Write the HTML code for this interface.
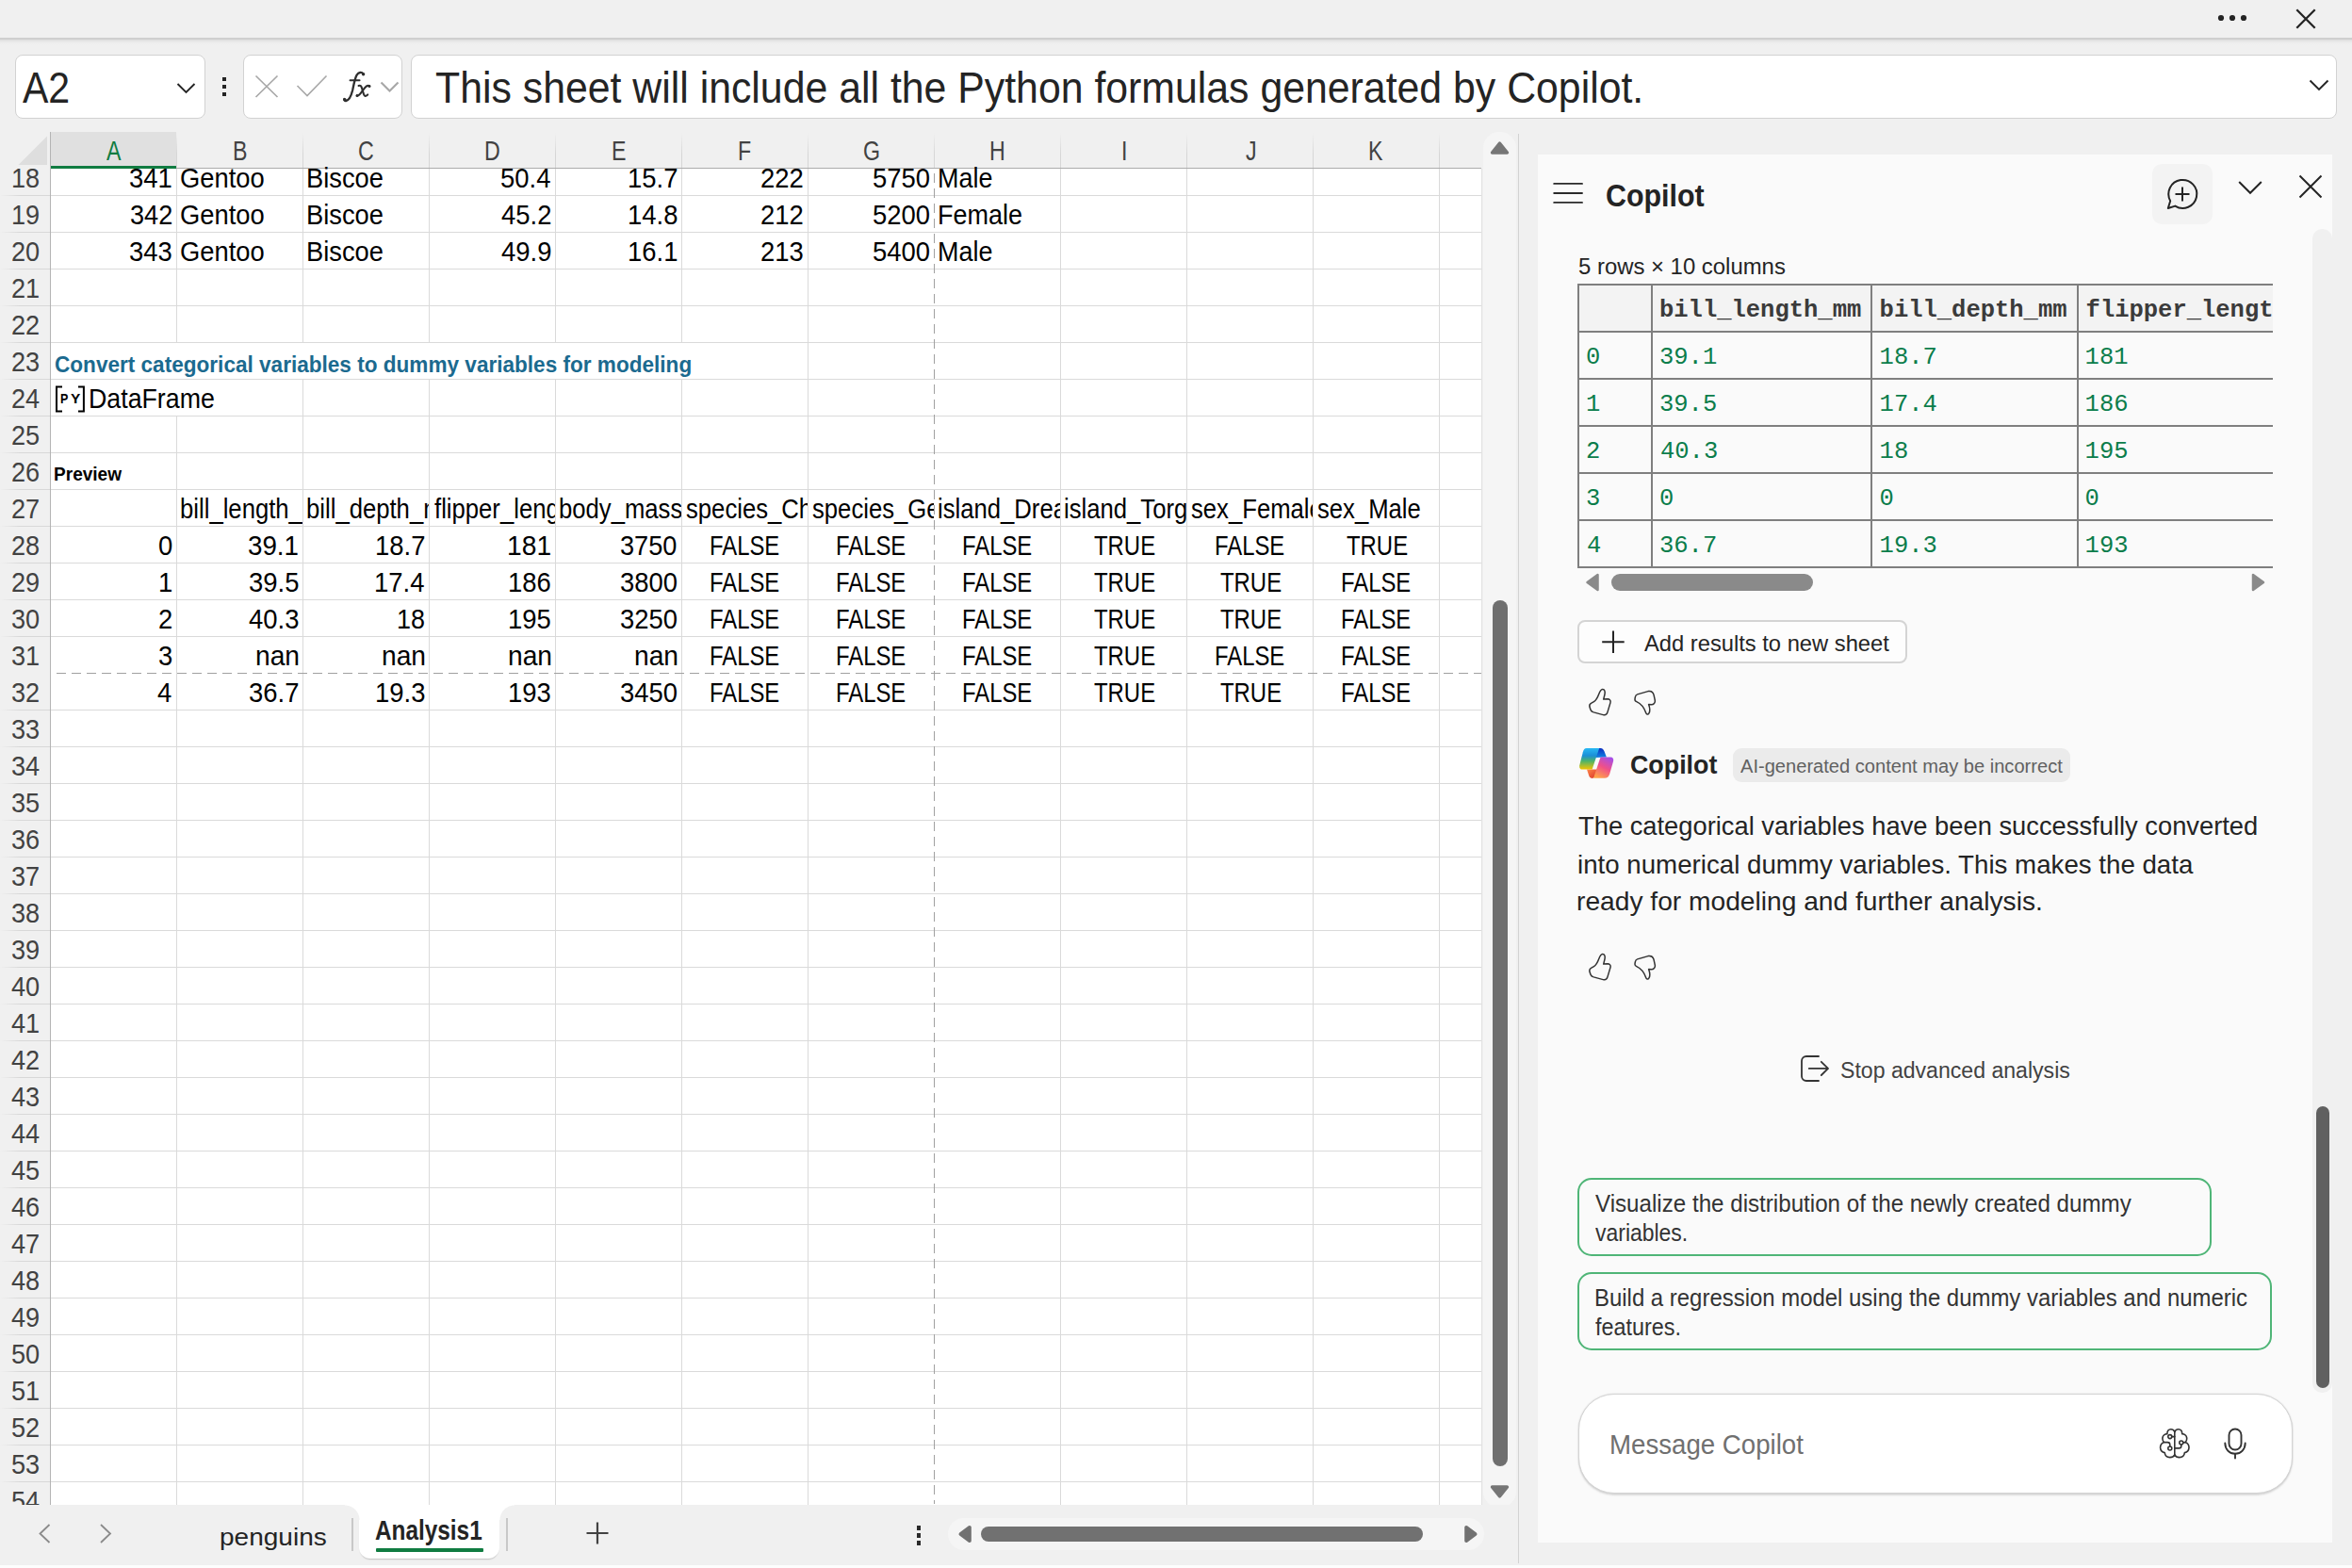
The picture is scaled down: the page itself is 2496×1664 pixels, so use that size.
<!DOCTYPE html>
<html><head><meta charset="utf-8"><style>
html,body{margin:0;padding:0}
body{width:2496px;height:1664px;overflow:hidden;background:#f0f0f0;position:relative;font-family:"Liberation Sans",sans-serif}
body div, body svg{position:absolute;box-sizing:content-box}
.t{white-space:pre;line-height:1}
svg{overflow:visible}
</style></head><body>
<div style="left:0;top:40px;width:2496px;height:8px;background:linear-gradient(#cfcfcf 0px,#cfcfcf 2px,#dadada 2px,#e3e3e3 3px,#e8e8e8 4px,#ececec 5px,#eeeeee 6px,#f0f0f0 8px)"></div>
<svg style="left:2340px;top:0;width:156px;height:40px" width="156" height="40"><circle cx="17" cy="19" r="3.1" fill="#242424"/><circle cx="29" cy="19" r="3.1" fill="#242424"/><circle cx="41" cy="19" r="3.1" fill="#242424"/><path d="M97.3 10.3 L116.7 29.7 M116.7 10.3 L97.3 29.7" stroke="#242424" stroke-width="2.3"/></svg>
<div style="left:16px;top:58px;width:200px;height:66px;background:#fff;border:1px solid #d2d2d2;border-radius:8px"></div>
<svg style="left:180px;top:80px;width:36px;height:30px" width="36" height="30"><path d="M8.5 9 L17.5 18 L26.5 9" fill="none" stroke="#242424" stroke-width="1.9"/></svg>
<div style="left:236px;top:82px;width:4px;height:4px;background:#242424"></div><div style="left:236px;top:90px;width:4px;height:4px;background:#242424"></div><div style="left:236px;top:98px;width:4px;height:4px;background:#242424"></div>
<div style="left:258px;top:58px;width:167px;height:66px;background:#fff;border:1px solid #d2d2d2;border-radius:8px"></div>
<svg style="left:258px;top:58px;width:170px;height:68px" width="170" height="68"><path d="M13.5 22.5 L36.5 45 M36.5 22.5 L13.5 45" stroke="#a8a8a8" stroke-width="1.7"/><path d="M57.5 33 L68 43.5 L88.5 22.5" fill="none" stroke="#a8a8a8" stroke-width="1.6"/><path d="M146.5 29.5 L155.5 38.5 L164.5 29.5" fill="none" stroke="#a8a8a8" stroke-width="2.2"/><g transform="translate(-8,-3)"><g fill="none" stroke="#2e2e2e" stroke-linecap="round"><path d="M135.6 23.6 C134 21.2 130.6 21.4 128.6 24.6 C126.6 28 125.6 34 124.1 41 C122.6 47 120.6 51.4 117.2 52 C115.8 52.2 114.9 51.2 115.4 50" stroke-width="2.3"/><path d="M121.5 30.3 L131.6 30.3" stroke-width="1.9"/><path d="M130.6 36 C132.4 35.2 133.4 36.2 134.1 38.6 L135.9 44.8 C136.7 47.4 138 47.6 140.2 45.4" stroke-width="2.1"/><path d="M142 36.2 C140.2 35.2 138.6 36.2 136.8 38.6 L132.6 44.2 C131.2 46 129.8 47 128.9 46.2" stroke-width="2.1"/></g><g fill="#2e2e2e"><circle cx="135.6" cy="23.8" r="1.7"/><circle cx="115.8" cy="50.6" r="1.7"/><circle cx="142" cy="36.4" r="1.5"/><circle cx="129" cy="46.4" r="1.5"/></g></g></svg>
<div style="left:436px;top:58px;width:2042px;height:66px;background:#fff;border:1px solid #d2d2d2;border-radius:8px"></div>
<svg style="left:2440px;top:76px;width:40px;height:30px" width="40" height="30"><path d="M11.5 9.5 L21 19 L30.5 9.5" fill="none" stroke="#242424" stroke-width="1.9"/></svg>
<div style="left:54px;top:179px;width:1518px;height:1418px;background:#fff"></div>
<div style="left:54px;top:140px;width:133px;height:36px;background:#e0e0e0"></div>
<div style="left:53px;top:176px;width:134px;height:3px;background:#107c41"></div>
<div style="left:187px;top:178px;width:1385px;height:1px;background:#acacac"></div>
<div style="left:53px;top:140px;width:1px;height:1457px;background:#b4b4b4"></div>
<svg style="left:19px;top:144px;width:32px;height:32px" width="32" height="32"><path d="M31 0.5 L31 31 L0.5 31 Z" fill="#dedede"/></svg>
<div style="left:187px;top:141px;width:1px;height:37px;background:linear-gradient(rgba(214,214,214,0),#d6d6d6 60%)"></div>
<div style="left:321px;top:141px;width:1px;height:37px;background:linear-gradient(rgba(214,214,214,0),#d6d6d6 60%)"></div>
<div style="left:455px;top:141px;width:1px;height:37px;background:linear-gradient(rgba(214,214,214,0),#d6d6d6 60%)"></div>
<div style="left:589px;top:141px;width:1px;height:37px;background:linear-gradient(rgba(214,214,214,0),#d6d6d6 60%)"></div>
<div style="left:723px;top:141px;width:1px;height:37px;background:linear-gradient(rgba(214,214,214,0),#d6d6d6 60%)"></div>
<div style="left:857px;top:141px;width:1px;height:37px;background:linear-gradient(rgba(214,214,214,0),#d6d6d6 60%)"></div>
<div style="left:991px;top:141px;width:1px;height:37px;background:linear-gradient(rgba(214,214,214,0),#d6d6d6 60%)"></div>
<div style="left:1125px;top:141px;width:1px;height:37px;background:linear-gradient(rgba(214,214,214,0),#d6d6d6 60%)"></div>
<div style="left:1259px;top:141px;width:1px;height:37px;background:linear-gradient(rgba(214,214,214,0),#d6d6d6 60%)"></div>
<div style="left:1393px;top:141px;width:1px;height:37px;background:linear-gradient(rgba(214,214,214,0),#d6d6d6 60%)"></div>
<div style="left:1527px;top:141px;width:1px;height:37px;background:linear-gradient(rgba(214,214,214,0),#d6d6d6 60%)"></div>
<div style="left:187px;top:179px;width:1px;height:1418px;background:#dadada"></div>
<div style="left:321px;top:179px;width:1px;height:1418px;background:#dadada"></div>
<div style="left:455px;top:179px;width:1px;height:1418px;background:#dadada"></div>
<div style="left:589px;top:179px;width:1px;height:1418px;background:#dadada"></div>
<div style="left:723px;top:179px;width:1px;height:1418px;background:#dadada"></div>
<div style="left:857px;top:179px;width:1px;height:1418px;background:#dadada"></div>
<div style="left:1125px;top:179px;width:1px;height:1418px;background:#dadada"></div>
<div style="left:1259px;top:179px;width:1px;height:1418px;background:#dadada"></div>
<div style="left:1393px;top:179px;width:1px;height:1418px;background:#dadada"></div>
<div style="left:1527px;top:179px;width:1px;height:1418px;background:#dadada"></div>
<div style="left:1572px;top:179px;width:1px;height:1418px;background:#e2e2e2"></div>
<div style="left:54px;top:207px;width:1518px;height:1px;background:#dadada"></div>
<div style="left:0px;top:207px;width:53px;height:1px;background:linear-gradient(90deg,rgba(216,216,216,0),#d8d8d8 40%)"></div>
<div style="left:54px;top:246px;width:1518px;height:1px;background:#dadada"></div>
<div style="left:0px;top:246px;width:53px;height:1px;background:linear-gradient(90deg,rgba(216,216,216,0),#d8d8d8 40%)"></div>
<div style="left:54px;top:285px;width:1518px;height:1px;background:#dadada"></div>
<div style="left:0px;top:285px;width:53px;height:1px;background:linear-gradient(90deg,rgba(216,216,216,0),#d8d8d8 40%)"></div>
<div style="left:54px;top:324px;width:1518px;height:1px;background:#dadada"></div>
<div style="left:0px;top:324px;width:53px;height:1px;background:linear-gradient(90deg,rgba(216,216,216,0),#d8d8d8 40%)"></div>
<div style="left:54px;top:363px;width:1518px;height:1px;background:#dadada"></div>
<div style="left:0px;top:363px;width:53px;height:1px;background:linear-gradient(90deg,rgba(216,216,216,0),#d8d8d8 40%)"></div>
<div style="left:54px;top:402px;width:1518px;height:1px;background:#dadada"></div>
<div style="left:0px;top:402px;width:53px;height:1px;background:linear-gradient(90deg,rgba(216,216,216,0),#d8d8d8 40%)"></div>
<div style="left:54px;top:441px;width:1518px;height:1px;background:#dadada"></div>
<div style="left:0px;top:441px;width:53px;height:1px;background:linear-gradient(90deg,rgba(216,216,216,0),#d8d8d8 40%)"></div>
<div style="left:54px;top:480px;width:1518px;height:1px;background:#dadada"></div>
<div style="left:0px;top:480px;width:53px;height:1px;background:linear-gradient(90deg,rgba(216,216,216,0),#d8d8d8 40%)"></div>
<div style="left:54px;top:519px;width:1518px;height:1px;background:#dadada"></div>
<div style="left:0px;top:519px;width:53px;height:1px;background:linear-gradient(90deg,rgba(216,216,216,0),#d8d8d8 40%)"></div>
<div style="left:54px;top:558px;width:1518px;height:1px;background:#dadada"></div>
<div style="left:0px;top:558px;width:53px;height:1px;background:linear-gradient(90deg,rgba(216,216,216,0),#d8d8d8 40%)"></div>
<div style="left:54px;top:597px;width:1518px;height:1px;background:#dadada"></div>
<div style="left:0px;top:597px;width:53px;height:1px;background:linear-gradient(90deg,rgba(216,216,216,0),#d8d8d8 40%)"></div>
<div style="left:54px;top:636px;width:1518px;height:1px;background:#dadada"></div>
<div style="left:0px;top:636px;width:53px;height:1px;background:linear-gradient(90deg,rgba(216,216,216,0),#d8d8d8 40%)"></div>
<div style="left:54px;top:675px;width:1518px;height:1px;background:#dadada"></div>
<div style="left:0px;top:675px;width:53px;height:1px;background:linear-gradient(90deg,rgba(216,216,216,0),#d8d8d8 40%)"></div>
<div style="left:54px;top:753px;width:1518px;height:1px;background:#dadada"></div>
<div style="left:0px;top:753px;width:53px;height:1px;background:linear-gradient(90deg,rgba(216,216,216,0),#d8d8d8 40%)"></div>
<div style="left:54px;top:792px;width:1518px;height:1px;background:#dadada"></div>
<div style="left:0px;top:792px;width:53px;height:1px;background:linear-gradient(90deg,rgba(216,216,216,0),#d8d8d8 40%)"></div>
<div style="left:54px;top:831px;width:1518px;height:1px;background:#dadada"></div>
<div style="left:0px;top:831px;width:53px;height:1px;background:linear-gradient(90deg,rgba(216,216,216,0),#d8d8d8 40%)"></div>
<div style="left:54px;top:870px;width:1518px;height:1px;background:#dadada"></div>
<div style="left:0px;top:870px;width:53px;height:1px;background:linear-gradient(90deg,rgba(216,216,216,0),#d8d8d8 40%)"></div>
<div style="left:54px;top:909px;width:1518px;height:1px;background:#dadada"></div>
<div style="left:0px;top:909px;width:53px;height:1px;background:linear-gradient(90deg,rgba(216,216,216,0),#d8d8d8 40%)"></div>
<div style="left:54px;top:948px;width:1518px;height:1px;background:#dadada"></div>
<div style="left:0px;top:948px;width:53px;height:1px;background:linear-gradient(90deg,rgba(216,216,216,0),#d8d8d8 40%)"></div>
<div style="left:54px;top:987px;width:1518px;height:1px;background:#dadada"></div>
<div style="left:0px;top:987px;width:53px;height:1px;background:linear-gradient(90deg,rgba(216,216,216,0),#d8d8d8 40%)"></div>
<div style="left:54px;top:1026px;width:1518px;height:1px;background:#dadada"></div>
<div style="left:0px;top:1026px;width:53px;height:1px;background:linear-gradient(90deg,rgba(216,216,216,0),#d8d8d8 40%)"></div>
<div style="left:54px;top:1065px;width:1518px;height:1px;background:#dadada"></div>
<div style="left:0px;top:1065px;width:53px;height:1px;background:linear-gradient(90deg,rgba(216,216,216,0),#d8d8d8 40%)"></div>
<div style="left:54px;top:1104px;width:1518px;height:1px;background:#dadada"></div>
<div style="left:0px;top:1104px;width:53px;height:1px;background:linear-gradient(90deg,rgba(216,216,216,0),#d8d8d8 40%)"></div>
<div style="left:54px;top:1143px;width:1518px;height:1px;background:#dadada"></div>
<div style="left:0px;top:1143px;width:53px;height:1px;background:linear-gradient(90deg,rgba(216,216,216,0),#d8d8d8 40%)"></div>
<div style="left:54px;top:1182px;width:1518px;height:1px;background:#dadada"></div>
<div style="left:0px;top:1182px;width:53px;height:1px;background:linear-gradient(90deg,rgba(216,216,216,0),#d8d8d8 40%)"></div>
<div style="left:54px;top:1221px;width:1518px;height:1px;background:#dadada"></div>
<div style="left:0px;top:1221px;width:53px;height:1px;background:linear-gradient(90deg,rgba(216,216,216,0),#d8d8d8 40%)"></div>
<div style="left:54px;top:1260px;width:1518px;height:1px;background:#dadada"></div>
<div style="left:0px;top:1260px;width:53px;height:1px;background:linear-gradient(90deg,rgba(216,216,216,0),#d8d8d8 40%)"></div>
<div style="left:54px;top:1299px;width:1518px;height:1px;background:#dadada"></div>
<div style="left:0px;top:1299px;width:53px;height:1px;background:linear-gradient(90deg,rgba(216,216,216,0),#d8d8d8 40%)"></div>
<div style="left:54px;top:1338px;width:1518px;height:1px;background:#dadada"></div>
<div style="left:0px;top:1338px;width:53px;height:1px;background:linear-gradient(90deg,rgba(216,216,216,0),#d8d8d8 40%)"></div>
<div style="left:54px;top:1377px;width:1518px;height:1px;background:#dadada"></div>
<div style="left:0px;top:1377px;width:53px;height:1px;background:linear-gradient(90deg,rgba(216,216,216,0),#d8d8d8 40%)"></div>
<div style="left:54px;top:1416px;width:1518px;height:1px;background:#dadada"></div>
<div style="left:0px;top:1416px;width:53px;height:1px;background:linear-gradient(90deg,rgba(216,216,216,0),#d8d8d8 40%)"></div>
<div style="left:54px;top:1455px;width:1518px;height:1px;background:#dadada"></div>
<div style="left:0px;top:1455px;width:53px;height:1px;background:linear-gradient(90deg,rgba(216,216,216,0),#d8d8d8 40%)"></div>
<div style="left:54px;top:1494px;width:1518px;height:1px;background:#dadada"></div>
<div style="left:0px;top:1494px;width:53px;height:1px;background:linear-gradient(90deg,rgba(216,216,216,0),#d8d8d8 40%)"></div>
<div style="left:54px;top:1533px;width:1518px;height:1px;background:#dadada"></div>
<div style="left:0px;top:1533px;width:53px;height:1px;background:linear-gradient(90deg,rgba(216,216,216,0),#d8d8d8 40%)"></div>
<div style="left:54px;top:1572px;width:1518px;height:1px;background:#dadada"></div>
<div style="left:0px;top:1572px;width:53px;height:1px;background:linear-gradient(90deg,rgba(216,216,216,0),#d8d8d8 40%)"></div>
<div style="left:187px;top:364px;width:670px;height:38px;background:#fff"></div>
<div style="left:187px;top:403px;width:1px;height:38px;background:#fff"></div>
<div style="left:54px;top:714px;width:1518px;height:1px;background:repeating-linear-gradient(90deg,transparent 0 6px,#a0a0a0 6px 16px)"></div>
<div style="left:991px;top:179px;width:1px;height:1418px;background:repeating-linear-gradient(180deg,transparent 0 6px,#a0a0a0 6px 16px);background-position:0 -1px"></div>
<svg style="left:58px;top:408.8px;width:34px;height:32px" width="34" height="32"><path d="M8 1.5 L2 1.5 L2 27.5 L8 27.5 M25 1.5 L30.9 1.5 L30.9 27.5 L25 27.5" fill="none" stroke="#000" stroke-width="2"/></svg>
<div style="left:1574px;top:140px;width:35px;height:1460px;background:#f5f5f5;border-radius:17px"></div>
<svg style="left:1574px;top:140px;width:35px;height:30px" width="35" height="30"><path d="M17.5 12 L25.5 22 L9.5 22 Z" fill="#767676" stroke="#767676" stroke-width="3.4" stroke-linejoin="round"/></svg>
<svg style="left:1574px;top:1570px;width:35px;height:30px" width="35" height="30"><path d="M17.5 18 L25.5 8 L9.5 8 Z" fill="#767676" stroke="#767676" stroke-width="3.4" stroke-linejoin="round"/></svg>
<div style="left:1584px;top:637px;width:16px;height:919px;background:#6f6f6f;border-radius:8px"></div>
<div style="left:1611px;top:142px;width:1px;height:1517px;background:#d2d2d2"></div>
<div style="left:0px;top:1597px;width:1611px;height:64px;background:#f0f0f0"></div>
<div style="left:0px;top:1661px;width:2496px;height:3px;background:#fdfdfd"></div>
<div style="left:381px;top:1597px;width:149px;height:57px;background:#fff;border-radius:0 0 12px 12px;box-shadow:0 2px 1.5px -1px rgba(0,0,0,0.2)"></div>
<div style="left:366px;top:1597px;width:16px;height:16px;background:radial-gradient(circle at 0 100%, #f0f0f0 15px, #fff 16px)"></div>
<div style="left:530px;top:1597px;width:16px;height:16px;background:radial-gradient(circle at 100% 100%, #f0f0f0 15px, #fff 16px)"></div>
<div style="left:398.9px;top:1643px;width:114px;height:4px;background:#107c41;border-radius:1px"></div>
<div style="left:373px;top:1611px;width:2px;height:35px;background:#c8c8c8"></div>
<div style="left:537px;top:1611px;width:2px;height:35px;background:#c8c8c8"></div>
<svg style="left:30px;top:1610px;width:100px;height:36px" width="100" height="36"><path d="M22.5 8 L12.5 17.5 L22.5 27" fill="none" stroke="#8a8a8a" stroke-width="1.8"/><path d="M77 8 L87 17.5 L77 27" fill="none" stroke="#8a8a8a" stroke-width="1.8"/></svg>
<svg style="left:615px;top:1610px;width:40px;height:36px" width="40" height="36"><path d="M19 5.5 L19 28.5 M7.5 17 L30.5 17" stroke="#424242" stroke-width="2.2"/></svg>
<div style="left:973px;top:1619.2px;width:4px;height:4.5px;background:#2a2a2a"></div><div style="left:973px;top:1627.3px;width:4px;height:4.5px;background:#2a2a2a"></div><div style="left:973px;top:1635.3px;width:4px;height:4.5px;background:#2a2a2a"></div>
<div style="left:1006px;top:1611px;width:569px;height:34px;background:#f5f5f5;border-radius:17px"></div>
<div style="left:1041px;top:1620px;width:469px;height:16px;background:#717171;border-radius:8px"></div>
<svg style="left:1010px;top:1611px;width:30px;height:34px" width="30" height="34"><path d="M9.3 17 L19 9.8 L19 24.2 Z" fill="#717171" stroke="#717171" stroke-width="3.6" stroke-linejoin="round"/></svg>
<svg style="left:1545px;top:1611px;width:30px;height:34px" width="30" height="34"><path d="M20.7 17 L11 9.8 L11 24.2 Z" fill="#717171" stroke="#717171" stroke-width="3.6" stroke-linejoin="round"/></svg>
<div style="left:1632px;top:164px;width:843px;height:1473px;background:#fafafa"></div>
<svg style="left:1640px;top:185px;width:50px;height:40px" width="50" height="40"><path d="M9.2 9.9 L39 9.9 M9.2 20 L39 20 M9.2 29.9 L39 29.9" stroke="#2a2a2a" stroke-width="1.9" stroke-linecap="round"/></svg>
<div style="left:2284px;top:174px;width:64px;height:64px;background:#f3f3f3;border-radius:10px"></div>
<svg style="left:2284px;top:174px;width:64px;height:64px" width="64" height="64"><path d="M19.2 39.2 A15 15 0 1 1 24.3 44.6 L16.8 47 Z" fill="none" stroke="#242424" stroke-width="2" stroke-linejoin="round"/><path d="M32 24.5 L32 39.5 M24.5 32 L39.5 32" stroke="#242424" stroke-width="2"/></svg>
<svg style="left:2370px;top:185px;width:36px;height:28px" width="36" height="28"><path d="M6.2 8 L18 19.8 L29.8 8" fill="none" stroke="#242424" stroke-width="2"/></svg>
<svg style="left:2434px;top:180px;width:36px;height:36px" width="36" height="36"><path d="M6.5 6.5 L29.5 29.5 M29.5 6.5 L6.5 29.5" stroke="#242424" stroke-width="2"/></svg>
<div style="left:2454px;top:243px;width:21px;height:1235px;background:#f0f0f0;border-radius:10px"></div>
<div style="left:2458px;top:1174px;width:14px;height:299px;background:#606060;border-radius:7px"></div>
<div style="left:1674px;top:301px;width:738px;height:301px;background:#fafafa"></div>
<div style="left:1674px;top:301px;width:738px;height:50px;background:#f3f3f3"></div>
<div style="left:1674px;top:301px;width:738px;height:2px;background:#7f7f7f"></div>
<div style="left:1674px;top:351px;width:738px;height:2px;background:#7f7f7f"></div>
<div style="left:1674px;top:401px;width:738px;height:2px;background:#7f7f7f"></div>
<div style="left:1674px;top:451px;width:738px;height:2px;background:#7f7f7f"></div>
<div style="left:1674px;top:501px;width:738px;height:2px;background:#7f7f7f"></div>
<div style="left:1674px;top:551px;width:738px;height:2px;background:#7f7f7f"></div>
<div style="left:1674px;top:601px;width:738px;height:2px;background:#7f7f7f"></div>
<div style="left:1674px;top:301px;width:2px;height:301px;background:#7f7f7f"></div>
<div style="left:1752px;top:301px;width:2px;height:301px;background:#7f7f7f"></div>
<div style="left:1985px;top:301px;width:2px;height:301px;background:#7f7f7f"></div>
<div style="left:2204px;top:301px;width:2px;height:301px;background:#7f7f7f"></div>
<svg style="left:1676px;top:602px;width:740px;height:32px" width="740" height="32"><path d="M8.5 16 L19.5 8 L19.5 24 Z" fill="#8a8a8a" stroke="#8a8a8a" stroke-width="2.5" stroke-linejoin="round"/><path d="M726 16 L715 8 L715 24 Z" fill="#8a8a8a" stroke="#8a8a8a" stroke-width="2.5" stroke-linejoin="round"/></svg>
<div style="left:1710px;top:609px;width:214px;height:18px;background:#8a8a8a;border-radius:9px"></div>
<div style="left:1674px;top:658px;width:346px;height:42px;border:2px solid #d4d4d4;border-radius:8px;background:#fdfdfd"></div>
<svg style="left:1690px;top:660px;width:44px;height:44px" width="44" height="44"><path d="M22 9.5 L22 33 M10.2 21.2 L33.7 21.2" stroke="#242424" stroke-width="2"/></svg>
<svg style="left:1670px;top:720px;width:100px;height:50px" width="100" height="50"><path d="M30.6 11.5 C28.6 11.7 27.8 13.8 26.8 16.5 C25.3 20.5 24.2 23 21.5 24.6 L18.8 26.2 C17.2 27.1 16.5 28.6 17 30.2 L18 33.2 C18.5 34.7 19.6 35.4 21.2 35.9 L31.3 38.6 C33.6 39.2 35.3 38 36 35.6 L39 25.6 C39.6 23.5 38.2 21.7 35.9 21.7 L31.7 22.1 L32.9 17.2 C33.7 13.6 32.8 11.3 30.6 11.5 Z" fill="none" stroke="#333" stroke-width="1.5" stroke-linejoin="round"/><path d="M79 13.6 L67.6 16.9 C66.2 17.3 65.6 18.3 65.3 19.8 L65 21.8 C64.8 23.2 65.5 24.1 66.8 24.6 C71.2 26.6 74.6 30.6 76.6 36.2 C77.3 38.1 78.8 38.8 79.8 37.2 C80.9 35.6 80.9 31.2 79.6 27.6 L82.1 27.8 C85 28 86.8 25.6 86.3 23.1 L85.1 17.6 C84.4 14.6 82 13 79 13.6 Z" fill="none" stroke="#333" stroke-width="1.5" stroke-linejoin="round"/></svg>
<svg style="left:1668px;top:786px;width:52px;height:48px" width="52" height="48"><defs><linearGradient id="lgA" x1="0" y1="0" x2="0" y2="1"><stop offset="0" stop-color="#27b8f4"/><stop offset="0.35" stop-color="#1a8fd6"/><stop offset="0.6" stop-color="#4cb36a"/><stop offset="1" stop-color="#f5c400"/></linearGradient><linearGradient id="lgB" x1="0" y1="0" x2="0" y2="1"><stop offset="0" stop-color="#0b2fc0"/><stop offset="1" stop-color="#1184e3"/></linearGradient><linearGradient id="lgC" x1="0.8" y1="0" x2="0.3" y2="1"><stop offset="0" stop-color="#a64ee8"/><stop offset="0.5" stop-color="#f05088"/><stop offset="1" stop-color="#ffa24a"/></linearGradient><linearGradient id="lgD" x1="0" y1="0" x2="1" y2="1"><stop offset="0" stop-color="#ff8a4a"/><stop offset="1" stop-color="#d9302a"/></linearGradient></defs><path d="M27 8 L30.5 8 C32.6 8 33.9 9.5 34.6 11.6 L36.9 17.6 L25 17.9 Z" fill="url(#lgB)"/><path d="M16 30.5 L27.5 30.5 L24.2 38.3 C23.6 39.5 22.6 39.9 21.4 39.9 C19.6 39.9 18.6 38.6 18.1 36.8 Z" fill="url(#lgD)"/><path d="M15.6 8 L29.2 8 L21.6 30.6 L11.6 30.6 C9 30.6 7.7 28.8 8.2 26.4 L11.8 12.2 C12.5 9.6 13.7 8 15.6 8 Z" fill="url(#lgA)"/><path d="M31.2 17.6 L41.2 17.6 C43.6 17.6 44.6 19.4 44.1 21.8 L40.2 35.2 C39.3 38.2 37.6 39.8 34.8 39.8 L23.1 39.8 L29.8 19.6 C30.2 18.4 30.6 17.6 31.2 17.6 Z" fill="url(#lgC)"/></svg>
<div style="left:1839px;top:794px;width:358px;height:36px;background:#ebebeb;border-radius:9px"></div>
<svg style="left:1670px;top:1001px;width:100px;height:50px" width="100" height="50"><path d="M30.6 11.5 C28.6 11.7 27.8 13.8 26.8 16.5 C25.3 20.5 24.2 23 21.5 24.6 L18.8 26.2 C17.2 27.1 16.5 28.6 17 30.2 L18 33.2 C18.5 34.7 19.6 35.4 21.2 35.9 L31.3 38.6 C33.6 39.2 35.3 38 36 35.6 L39 25.6 C39.6 23.5 38.2 21.7 35.9 21.7 L31.7 22.1 L32.9 17.2 C33.7 13.6 32.8 11.3 30.6 11.5 Z" fill="none" stroke="#333" stroke-width="1.5" stroke-linejoin="round"/><path d="M79 13.6 L67.6 16.9 C66.2 17.3 65.6 18.3 65.3 19.8 L65 21.8 C64.8 23.2 65.5 24.1 66.8 24.6 C71.2 26.6 74.6 30.6 76.6 36.2 C77.3 38.1 78.8 38.8 79.8 37.2 C80.9 35.6 80.9 31.2 79.6 27.6 L82.1 27.8 C85 28 86.8 25.6 86.3 23.1 L85.1 17.6 C84.4 14.6 82 13 79 13.6 Z" fill="none" stroke="#333" stroke-width="1.5" stroke-linejoin="round"/></svg>
<svg style="left:1900px;top:1110px;width:50px;height:50px" width="50" height="50"><path d="M30 11 L17 11 C14.2 11 12 13.2 12 16 L12 32 C12 34.8 14.2 37 17 37 L30 37" fill="none" stroke="#333" stroke-width="1.8" stroke-linecap="round"/><path d="M19.8 23.9 L40 23.9 M32.8 16.8 L40 23.9 L32.8 31" fill="none" stroke="#333" stroke-width="1.8" stroke-linecap="round" stroke-linejoin="round"/></svg>
<div style="left:1674px;top:1250px;width:669px;height:79px;border:2px solid #4fb577;border-radius:15px"></div>
<div style="left:1674px;top:1350px;width:733px;height:79px;border:2px solid #4fb577;border-radius:15px"></div>
<div style="left:1675px;top:1479px;width:756px;height:104px;background:#fff;border:1px solid #d4d4d4;border-radius:38px;box-shadow:0 0 2px rgba(0,0,0,0.12),0 1.5px 2px rgba(0,0,0,0.12)"></div>
<svg style="left:2280px;top:1505px;width:120px;height:55px" width="120" height="55" fill="none" stroke="#333" stroke-width="1.6" stroke-linecap="round" stroke-linejoin="round"><path d="M27.8 13.5 L27.8 40"/><path d="M27.8 14.5 C26.8 12.4 25.4 11.7 23.8 11.7 C21.3 11.7 19.8 13.8 19.9 16.6 C17.4 16.6 14.7 18.6 14.9 22 C15 23.8 15.8 25 16.6 25.6 C14 26.6 12.5 29 12.6 31.4 C12.8 34.2 14.8 36.2 17.2 36.6 C17.6 39.6 20 41.6 22.8 41.6 C25.4 41.6 27 40.4 27.8 39"/><path d="M27.8 14.5 C28.8 12.4 30.2 11.7 31.8 11.7 C34.3 11.7 35.8 13.8 35.7 16.6 C38.2 16.6 40.9 18.6 40.7 22 C40.6 23.8 39.8 25 39 25.6 C41.6 26.6 43.1 29 43 31.4 C42.8 34.2 40.8 36.2 38.4 36.6 C38 39.6 35.6 41.6 32.8 41.6 C30.2 41.6 28.6 40.4 27.8 39"/><circle cx="22.8" cy="19.6" r="2"/><path d="M24.8 19.6 L27.8 19.6"/><path d="M16.8 25.6 L20.3 25.6 C22 25.6 22.8 26.6 22.8 28.2 L22.8 30"/><circle cx="22.8" cy="32" r="2"/><circle cx="34.8" cy="26" r="2"/><path d="M36.8 26 L39 25.6"/><path d="M34.8 28 L34.8 29.5 C34.8 31 34 31.9 32.4 31.9 L27.8 31.9"/></svg>
<svg style="left:2340px;top:1505px;width:60px;height:55px" width="60" height="55" fill="none" stroke="#333" stroke-width="1.9" stroke-linecap="round"><rect x="25.5" y="11.5" width="13" height="22" rx="6.5"/><path d="M21.3 26.5 C21.3 33 25.8 37.8 32 37.8 C38.2 37.8 42.7 33 42.7 26.5"/><path d="M32 37.8 L32 42.6"/></svg>
<div class="t" style="left:23.50px;top:69.40px;font-family:'Liberation Sans';font-size:47px;font-weight:400;font-style:normal;color:#242424;transform:scaleX(0.8727);transform-origin:0 0;">A2</div>
<div class="t" style="left:462.07px;top:69.80px;font-family:'Liberation Sans';font-size:46px;font-weight:400;font-style:normal;color:#242424;transform:scaleX(0.9304);transform-origin:0 0;">This sheet will include all the Python formulas generated by Copilot.</div>
<div class="t" style="left:113.20px;top:146.00px;font-family:'Liberation Sans';font-size:29px;font-weight:400;font-style:normal;color:#107c41;transform:scaleX(0.8000);transform-origin:0 0;">A</div>
<div class="t" style="left:246.80px;top:146.00px;font-family:'Liberation Sans';font-size:29px;font-weight:400;font-style:normal;color:#424242;transform:scaleX(0.8000);transform-origin:0 0;">B</div>
<div class="t" style="left:380.00px;top:146.00px;font-family:'Liberation Sans';font-size:29px;font-weight:400;font-style:normal;color:#424242;transform:scaleX(0.8000);transform-origin:0 0;">C</div>
<div class="t" style="left:514.00px;top:146.00px;font-family:'Liberation Sans';font-size:29px;font-weight:400;font-style:normal;color:#424242;transform:scaleX(0.8000);transform-origin:0 0;">D</div>
<div class="t" style="left:648.80px;top:146.00px;font-family:'Liberation Sans';font-size:29px;font-weight:400;font-style:normal;color:#424242;transform:scaleX(0.8000);transform-origin:0 0;">E</div>
<div class="t" style="left:783.20px;top:146.00px;font-family:'Liberation Sans';font-size:29px;font-weight:400;font-style:normal;color:#424242;transform:scaleX(0.8000);transform-origin:0 0;">F</div>
<div class="t" style="left:916.00px;top:146.00px;font-family:'Liberation Sans';font-size:29px;font-weight:400;font-style:normal;color:#424242;transform:scaleX(0.8000);transform-origin:0 0;">G</div>
<div class="t" style="left:1050.40px;top:146.00px;font-family:'Liberation Sans';font-size:29px;font-weight:400;font-style:normal;color:#424242;transform:scaleX(0.8000);transform-origin:0 0;">H</div>
<div class="t" style="left:1189.60px;top:146.00px;font-family:'Liberation Sans';font-size:29px;font-weight:400;font-style:normal;color:#424242;transform:scaleX(0.8000);transform-origin:0 0;">I</div>
<div class="t" style="left:1321.60px;top:146.00px;font-family:'Liberation Sans';font-size:29px;font-weight:400;font-style:normal;color:#424242;transform:scaleX(0.8000);transform-origin:0 0;">J</div>
<div class="t" style="left:1452.40px;top:146.00px;font-family:'Liberation Sans';font-size:29px;font-weight:400;font-style:normal;color:#424242;transform:scaleX(0.8000);transform-origin:0 0;">K</div>
<div style="left:0px;top:179px;width:53px;height:1418px;overflow:hidden"><div class="t" style="left:11.56px;top:-4.60px;font-family:'Liberation Sans';font-size:29.5px;font-weight:400;font-style:normal;color:#424242;transform:scaleX(0.9200);transform-origin:0 0;">18</div></div>
<div style="left:0px;top:179px;width:53px;height:1418px;overflow:hidden"><div class="t" style="left:11.56px;top:34.40px;font-family:'Liberation Sans';font-size:29.5px;font-weight:400;font-style:normal;color:#424242;transform:scaleX(0.9200);transform-origin:0 0;">19</div></div>
<div style="left:0px;top:179px;width:53px;height:1418px;overflow:hidden"><div class="t" style="left:11.56px;top:73.40px;font-family:'Liberation Sans';font-size:29.5px;font-weight:400;font-style:normal;color:#424242;transform:scaleX(0.9200);transform-origin:0 0;">20</div></div>
<div style="left:0px;top:179px;width:53px;height:1418px;overflow:hidden"><div class="t" style="left:11.56px;top:112.40px;font-family:'Liberation Sans';font-size:29.5px;font-weight:400;font-style:normal;color:#424242;transform:scaleX(0.9200);transform-origin:0 0;">21</div></div>
<div style="left:0px;top:179px;width:53px;height:1418px;overflow:hidden"><div class="t" style="left:11.56px;top:151.40px;font-family:'Liberation Sans';font-size:29.5px;font-weight:400;font-style:normal;color:#424242;transform:scaleX(0.9200);transform-origin:0 0;">22</div></div>
<div style="left:0px;top:179px;width:53px;height:1418px;overflow:hidden"><div class="t" style="left:11.56px;top:190.40px;font-family:'Liberation Sans';font-size:29.5px;font-weight:400;font-style:normal;color:#424242;transform:scaleX(0.9200);transform-origin:0 0;">23</div></div>
<div style="left:0px;top:179px;width:53px;height:1418px;overflow:hidden"><div class="t" style="left:11.56px;top:229.40px;font-family:'Liberation Sans';font-size:29.5px;font-weight:400;font-style:normal;color:#424242;transform:scaleX(0.9200);transform-origin:0 0;">24</div></div>
<div style="left:0px;top:179px;width:53px;height:1418px;overflow:hidden"><div class="t" style="left:11.56px;top:268.40px;font-family:'Liberation Sans';font-size:29.5px;font-weight:400;font-style:normal;color:#424242;transform:scaleX(0.9200);transform-origin:0 0;">25</div></div>
<div style="left:0px;top:179px;width:53px;height:1418px;overflow:hidden"><div class="t" style="left:11.56px;top:307.40px;font-family:'Liberation Sans';font-size:29.5px;font-weight:400;font-style:normal;color:#424242;transform:scaleX(0.9200);transform-origin:0 0;">26</div></div>
<div style="left:0px;top:179px;width:53px;height:1418px;overflow:hidden"><div class="t" style="left:11.56px;top:346.40px;font-family:'Liberation Sans';font-size:29.5px;font-weight:400;font-style:normal;color:#424242;transform:scaleX(0.9200);transform-origin:0 0;">27</div></div>
<div style="left:0px;top:179px;width:53px;height:1418px;overflow:hidden"><div class="t" style="left:11.56px;top:385.40px;font-family:'Liberation Sans';font-size:29.5px;font-weight:400;font-style:normal;color:#424242;transform:scaleX(0.9200);transform-origin:0 0;">28</div></div>
<div style="left:0px;top:179px;width:53px;height:1418px;overflow:hidden"><div class="t" style="left:11.56px;top:424.40px;font-family:'Liberation Sans';font-size:29.5px;font-weight:400;font-style:normal;color:#424242;transform:scaleX(0.9200);transform-origin:0 0;">29</div></div>
<div style="left:0px;top:179px;width:53px;height:1418px;overflow:hidden"><div class="t" style="left:12.02px;top:463.40px;font-family:'Liberation Sans';font-size:29.5px;font-weight:400;font-style:normal;color:#424242;transform:scaleX(0.9200);transform-origin:0 0;">30</div></div>
<div style="left:0px;top:179px;width:53px;height:1418px;overflow:hidden"><div class="t" style="left:12.02px;top:502.40px;font-family:'Liberation Sans';font-size:29.5px;font-weight:400;font-style:normal;color:#424242;transform:scaleX(0.9200);transform-origin:0 0;">31</div></div>
<div style="left:0px;top:179px;width:53px;height:1418px;overflow:hidden"><div class="t" style="left:12.02px;top:541.40px;font-family:'Liberation Sans';font-size:29.5px;font-weight:400;font-style:normal;color:#424242;transform:scaleX(0.9200);transform-origin:0 0;">32</div></div>
<div style="left:0px;top:179px;width:53px;height:1418px;overflow:hidden"><div class="t" style="left:12.02px;top:580.40px;font-family:'Liberation Sans';font-size:29.5px;font-weight:400;font-style:normal;color:#424242;transform:scaleX(0.9200);transform-origin:0 0;">33</div></div>
<div style="left:0px;top:179px;width:53px;height:1418px;overflow:hidden"><div class="t" style="left:12.02px;top:619.40px;font-family:'Liberation Sans';font-size:29.5px;font-weight:400;font-style:normal;color:#424242;transform:scaleX(0.9200);transform-origin:0 0;">34</div></div>
<div style="left:0px;top:179px;width:53px;height:1418px;overflow:hidden"><div class="t" style="left:12.02px;top:658.40px;font-family:'Liberation Sans';font-size:29.5px;font-weight:400;font-style:normal;color:#424242;transform:scaleX(0.9200);transform-origin:0 0;">35</div></div>
<div style="left:0px;top:179px;width:53px;height:1418px;overflow:hidden"><div class="t" style="left:12.02px;top:697.40px;font-family:'Liberation Sans';font-size:29.5px;font-weight:400;font-style:normal;color:#424242;transform:scaleX(0.9200);transform-origin:0 0;">36</div></div>
<div style="left:0px;top:179px;width:53px;height:1418px;overflow:hidden"><div class="t" style="left:12.02px;top:736.40px;font-family:'Liberation Sans';font-size:29.5px;font-weight:400;font-style:normal;color:#424242;transform:scaleX(0.9200);transform-origin:0 0;">37</div></div>
<div style="left:0px;top:179px;width:53px;height:1418px;overflow:hidden"><div class="t" style="left:12.02px;top:775.40px;font-family:'Liberation Sans';font-size:29.5px;font-weight:400;font-style:normal;color:#424242;transform:scaleX(0.9200);transform-origin:0 0;">38</div></div>
<div style="left:0px;top:179px;width:53px;height:1418px;overflow:hidden"><div class="t" style="left:12.02px;top:814.40px;font-family:'Liberation Sans';font-size:29.5px;font-weight:400;font-style:normal;color:#424242;transform:scaleX(0.9200);transform-origin:0 0;">39</div></div>
<div style="left:0px;top:179px;width:53px;height:1418px;overflow:hidden"><div class="t" style="left:12.02px;top:853.40px;font-family:'Liberation Sans';font-size:29.5px;font-weight:400;font-style:normal;color:#424242;transform:scaleX(0.9200);transform-origin:0 0;">40</div></div>
<div style="left:0px;top:179px;width:53px;height:1418px;overflow:hidden"><div class="t" style="left:12.02px;top:892.40px;font-family:'Liberation Sans';font-size:29.5px;font-weight:400;font-style:normal;color:#424242;transform:scaleX(0.9200);transform-origin:0 0;">41</div></div>
<div style="left:0px;top:179px;width:53px;height:1418px;overflow:hidden"><div class="t" style="left:12.02px;top:931.40px;font-family:'Liberation Sans';font-size:29.5px;font-weight:400;font-style:normal;color:#424242;transform:scaleX(0.9200);transform-origin:0 0;">42</div></div>
<div style="left:0px;top:179px;width:53px;height:1418px;overflow:hidden"><div class="t" style="left:12.02px;top:970.40px;font-family:'Liberation Sans';font-size:29.5px;font-weight:400;font-style:normal;color:#424242;transform:scaleX(0.9200);transform-origin:0 0;">43</div></div>
<div style="left:0px;top:179px;width:53px;height:1418px;overflow:hidden"><div class="t" style="left:12.02px;top:1009.40px;font-family:'Liberation Sans';font-size:29.5px;font-weight:400;font-style:normal;color:#424242;transform:scaleX(0.9200);transform-origin:0 0;">44</div></div>
<div style="left:0px;top:179px;width:53px;height:1418px;overflow:hidden"><div class="t" style="left:12.02px;top:1048.40px;font-family:'Liberation Sans';font-size:29.5px;font-weight:400;font-style:normal;color:#424242;transform:scaleX(0.9200);transform-origin:0 0;">45</div></div>
<div style="left:0px;top:179px;width:53px;height:1418px;overflow:hidden"><div class="t" style="left:12.02px;top:1087.40px;font-family:'Liberation Sans';font-size:29.5px;font-weight:400;font-style:normal;color:#424242;transform:scaleX(0.9200);transform-origin:0 0;">46</div></div>
<div style="left:0px;top:179px;width:53px;height:1418px;overflow:hidden"><div class="t" style="left:12.02px;top:1126.40px;font-family:'Liberation Sans';font-size:29.5px;font-weight:400;font-style:normal;color:#424242;transform:scaleX(0.9200);transform-origin:0 0;">47</div></div>
<div style="left:0px;top:179px;width:53px;height:1418px;overflow:hidden"><div class="t" style="left:12.02px;top:1165.40px;font-family:'Liberation Sans';font-size:29.5px;font-weight:400;font-style:normal;color:#424242;transform:scaleX(0.9200);transform-origin:0 0;">48</div></div>
<div style="left:0px;top:179px;width:53px;height:1418px;overflow:hidden"><div class="t" style="left:12.02px;top:1204.40px;font-family:'Liberation Sans';font-size:29.5px;font-weight:400;font-style:normal;color:#424242;transform:scaleX(0.9200);transform-origin:0 0;">49</div></div>
<div style="left:0px;top:179px;width:53px;height:1418px;overflow:hidden"><div class="t" style="left:12.02px;top:1243.40px;font-family:'Liberation Sans';font-size:29.5px;font-weight:400;font-style:normal;color:#424242;transform:scaleX(0.9200);transform-origin:0 0;">50</div></div>
<div style="left:0px;top:179px;width:53px;height:1418px;overflow:hidden"><div class="t" style="left:12.02px;top:1282.40px;font-family:'Liberation Sans';font-size:29.5px;font-weight:400;font-style:normal;color:#424242;transform:scaleX(0.9200);transform-origin:0 0;">51</div></div>
<div style="left:0px;top:179px;width:53px;height:1418px;overflow:hidden"><div class="t" style="left:12.02px;top:1321.40px;font-family:'Liberation Sans';font-size:29.5px;font-weight:400;font-style:normal;color:#424242;transform:scaleX(0.9200);transform-origin:0 0;">52</div></div>
<div style="left:0px;top:179px;width:53px;height:1418px;overflow:hidden"><div class="t" style="left:12.02px;top:1360.40px;font-family:'Liberation Sans';font-size:29.5px;font-weight:400;font-style:normal;color:#424242;transform:scaleX(0.9200);transform-origin:0 0;">53</div></div>
<div style="left:0px;top:179px;width:53px;height:1418px;overflow:hidden"><div class="t" style="left:12.02px;top:1399.40px;font-family:'Liberation Sans';font-size:29.5px;font-weight:400;font-style:normal;color:#424242;transform:scaleX(0.9200);transform-origin:0 0;">54</div></div>
<div class="t" style="left:137.36px;top:174.40px;font-family:'Liberation Sans';font-size:29.5px;font-weight:400;font-style:normal;color:#000;transform:scaleX(0.9300);transform-origin:0 0;">341</div>
<div class="t" style="left:191.15px;top:174.40px;font-family:'Liberation Sans';font-size:29.5px;font-weight:400;font-style:normal;color:#000;transform:scaleX(0.9269);transform-origin:0 0;">Gentoo</div>
<div class="t" style="left:325.15px;top:174.40px;font-family:'Liberation Sans';font-size:29.5px;font-weight:400;font-style:normal;color:#000;transform:scaleX(0.9247);transform-origin:0 0;">Biscoe</div>
<div class="t" style="left:530.99px;top:174.40px;font-family:'Liberation Sans';font-size:29.5px;font-weight:400;font-style:normal;color:#000;transform:scaleX(0.9300);transform-origin:0 0;">50.4</div>
<div class="t" style="left:665.92px;top:174.40px;font-family:'Liberation Sans';font-size:29.5px;font-weight:400;font-style:normal;color:#000;transform:scaleX(0.9300);transform-origin:0 0;">15.7</div>
<div class="t" style="left:807.36px;top:174.40px;font-family:'Liberation Sans';font-size:29.5px;font-weight:400;font-style:normal;color:#000;transform:scaleX(0.9300);transform-origin:0 0;">222</div>
<div class="t" style="left:925.55px;top:174.40px;font-family:'Liberation Sans';font-size:29.5px;font-weight:400;font-style:normal;color:#000;transform:scaleX(0.9300);transform-origin:0 0;">5750</div>
<div class="t" style="left:995.17px;top:174.40px;font-family:'Liberation Sans';font-size:29.5px;font-weight:400;font-style:normal;color:#000;transform:scaleX(0.9131);transform-origin:0 0;">Male</div>
<div class="t" style="left:137.88px;top:213.40px;font-family:'Liberation Sans';font-size:29.5px;font-weight:400;font-style:normal;color:#000;transform:scaleX(0.9191);transform-origin:0 0;">342</div>
<div class="t" style="left:191.15px;top:213.40px;font-family:'Liberation Sans';font-size:29.5px;font-weight:400;font-style:normal;color:#000;transform:scaleX(0.9269);transform-origin:0 0;">Gentoo</div>
<div class="t" style="left:325.15px;top:213.40px;font-family:'Liberation Sans';font-size:29.5px;font-weight:400;font-style:normal;color:#000;transform:scaleX(0.9247);transform-origin:0 0;">Biscoe</div>
<div class="t" style="left:531.92px;top:213.40px;font-family:'Liberation Sans';font-size:29.5px;font-weight:400;font-style:normal;color:#000;transform:scaleX(0.9300);transform-origin:0 0;">45.2</div>
<div class="t" style="left:665.92px;top:213.40px;font-family:'Liberation Sans';font-size:29.5px;font-weight:400;font-style:normal;color:#000;transform:scaleX(0.9300);transform-origin:0 0;">14.8</div>
<div class="t" style="left:807.36px;top:213.40px;font-family:'Liberation Sans';font-size:29.5px;font-weight:400;font-style:normal;color:#000;transform:scaleX(0.9300);transform-origin:0 0;">212</div>
<div class="t" style="left:925.55px;top:213.40px;font-family:'Liberation Sans';font-size:29.5px;font-weight:400;font-style:normal;color:#000;transform:scaleX(0.9300);transform-origin:0 0;">5200</div>
<div class="t" style="left:995.17px;top:213.40px;font-family:'Liberation Sans';font-size:29.5px;font-weight:400;font-style:normal;color:#000;transform:scaleX(0.9147);transform-origin:0 0;">Female</div>
<div class="t" style="left:137.36px;top:252.40px;font-family:'Liberation Sans';font-size:29.5px;font-weight:400;font-style:normal;color:#000;transform:scaleX(0.9300);transform-origin:0 0;">343</div>
<div class="t" style="left:191.15px;top:252.40px;font-family:'Liberation Sans';font-size:29.5px;font-weight:400;font-style:normal;color:#000;transform:scaleX(0.9269);transform-origin:0 0;">Gentoo</div>
<div class="t" style="left:325.15px;top:252.40px;font-family:'Liberation Sans';font-size:29.5px;font-weight:400;font-style:normal;color:#000;transform:scaleX(0.9247);transform-origin:0 0;">Biscoe</div>
<div class="t" style="left:531.92px;top:252.40px;font-family:'Liberation Sans';font-size:29.5px;font-weight:400;font-style:normal;color:#000;transform:scaleX(0.9300);transform-origin:0 0;">49.9</div>
<div class="t" style="left:665.92px;top:252.40px;font-family:'Liberation Sans';font-size:29.5px;font-weight:400;font-style:normal;color:#000;transform:scaleX(0.9300);transform-origin:0 0;">16.1</div>
<div class="t" style="left:807.36px;top:252.40px;font-family:'Liberation Sans';font-size:29.5px;font-weight:400;font-style:normal;color:#000;transform:scaleX(0.9300);transform-origin:0 0;">213</div>
<div class="t" style="left:925.55px;top:252.40px;font-family:'Liberation Sans';font-size:29.5px;font-weight:400;font-style:normal;color:#000;transform:scaleX(0.9300);transform-origin:0 0;">5400</div>
<div class="t" style="left:995.17px;top:252.40px;font-family:'Liberation Sans';font-size:29.5px;font-weight:400;font-style:normal;color:#000;transform:scaleX(0.9131);transform-origin:0 0;">Male</div>
<div class="t" style="left:58.36px;top:374.60px;font-family:'Liberation Sans';font-size:24px;font-weight:700;font-style:normal;color:#1b6a8f;transform:scaleX(0.9406);transform-origin:0 0;">Convert categorical variables to dummy variables for modeling</div>
<div class="t" style="left:64.34px;top:416.00px;font-family:'Liberation Sans';font-size:14.5px;font-weight:700;font-style:normal;color:#000;transform:scaleX(0.8625);transform-origin:0 0;">P</div>
<div class="t" style="left:74.74px;top:416.00px;font-family:'Liberation Sans';font-size:14.5px;font-weight:700;font-style:normal;color:#000;transform:scaleX(1.0625);transform-origin:0 0;">Y</div>
<div class="t" style="left:93.65px;top:409.00px;font-family:'Liberation Sans';font-size:29px;font-weight:400;font-style:normal;color:#000;transform:scaleX(0.9225);transform-origin:0 0;">DataFrame</div>
<div class="t" style="left:56.63px;top:494.40px;font-family:'Liberation Sans';font-size:19.6px;font-weight:700;font-style:normal;color:#000;transform:scaleX(0.9726);transform-origin:0 0;">Preview</div>
<div style="left:188px;top:520px;width:133px;height:38px;overflow:hidden"><div class="t" style="left:3.26px;top:5.40px;font-family:'Liberation Sans';font-size:29.5px;font-weight:400;font-style:normal;color:#000;transform:scaleX(0.8700);transform-origin:0 0;">bill_length_mm</div></div>
<div style="left:322px;top:520px;width:133px;height:38px;overflow:hidden"><div class="t" style="left:3.26px;top:5.40px;font-family:'Liberation Sans';font-size:29.5px;font-weight:400;font-style:normal;color:#000;transform:scaleX(0.8700);transform-origin:0 0;">bill_depth_mm</div></div>
<div style="left:456px;top:520px;width:133px;height:38px;overflow:hidden"><div class="t" style="left:5.00px;top:5.40px;font-family:'Liberation Sans';font-size:29.5px;font-weight:400;font-style:normal;color:#000;transform:scaleX(0.8700);transform-origin:0 0;">flipper_length_mm</div></div>
<div style="left:590px;top:520px;width:133px;height:38px;overflow:hidden"><div class="t" style="left:3.26px;top:5.40px;font-family:'Liberation Sans';font-size:29.5px;font-weight:400;font-style:normal;color:#000;transform:scaleX(0.8700);transform-origin:0 0;">body_mass_g</div></div>
<div style="left:724px;top:520px;width:133px;height:38px;overflow:hidden"><div class="t" style="left:4.13px;top:5.40px;font-family:'Liberation Sans';font-size:29.5px;font-weight:400;font-style:normal;color:#000;transform:scaleX(0.8700);transform-origin:0 0;">species_Chinstrap</div></div>
<div style="left:858px;top:520px;width:133px;height:38px;overflow:hidden"><div class="t" style="left:4.13px;top:5.40px;font-family:'Liberation Sans';font-size:29.5px;font-weight:400;font-style:normal;color:#000;transform:scaleX(0.8700);transform-origin:0 0;">species_Gentoo</div></div>
<div style="left:992px;top:520px;width:133px;height:38px;overflow:hidden"><div class="t" style="left:3.26px;top:5.40px;font-family:'Liberation Sans';font-size:29.5px;font-weight:400;font-style:normal;color:#000;transform:scaleX(0.8700);transform-origin:0 0;">island_Dream</div></div>
<div style="left:1126px;top:520px;width:133px;height:38px;overflow:hidden"><div class="t" style="left:3.26px;top:5.40px;font-family:'Liberation Sans';font-size:29.5px;font-weight:400;font-style:normal;color:#000;transform:scaleX(0.8700);transform-origin:0 0;">island_Torgersen</div></div>
<div style="left:1260px;top:520px;width:133px;height:38px;overflow:hidden"><div class="t" style="left:4.13px;top:5.40px;font-family:'Liberation Sans';font-size:29.5px;font-weight:400;font-style:normal;color:#000;transform:scaleX(0.8700);transform-origin:0 0;">sex_Female</div></div>
<div style="left:1394px;top:520px;width:133px;height:38px;overflow:hidden"><div class="t" style="left:4.13px;top:5.40px;font-family:'Liberation Sans';font-size:29.5px;font-weight:400;font-style:normal;color:#000;transform:scaleX(0.8700);transform-origin:0 0;">sex_Male</div></div>
<div class="t" style="left:168.05px;top:564.40px;font-family:'Liberation Sans';font-size:29.5px;font-weight:400;font-style:normal;color:#000;transform:scaleX(0.9300);transform-origin:0 0;">0</div>
<div class="t" style="left:263.36px;top:564.40px;font-family:'Liberation Sans';font-size:29.5px;font-weight:400;font-style:normal;color:#000;transform:scaleX(0.9400);transform-origin:0 0;">39.1</div>
<div class="t" style="left:397.92px;top:564.40px;font-family:'Liberation Sans';font-size:29.5px;font-weight:400;font-style:normal;color:#000;transform:scaleX(0.9300);transform-origin:0 0;">18.7</div>
<div class="t" style="left:538.09px;top:564.40px;font-family:'Liberation Sans';font-size:29.5px;font-weight:400;font-style:normal;color:#000;transform:scaleX(0.9565);transform-origin:0 0;">181</div>
<div class="t" style="left:658.18px;top:564.40px;font-family:'Liberation Sans';font-size:29.5px;font-weight:400;font-style:normal;color:#000;transform:scaleX(0.9203);transform-origin:0 0;">3750</div>
<div class="t" style="left:753.38px;top:564.40px;font-family:'Liberation Sans';font-size:29.5px;font-weight:400;font-style:normal;color:#000;transform:scaleX(0.8090);transform-origin:0 0;">FALSE</div>
<div class="t" style="left:887.38px;top:564.40px;font-family:'Liberation Sans';font-size:29.5px;font-weight:400;font-style:normal;color:#000;transform:scaleX(0.8090);transform-origin:0 0;">FALSE</div>
<div class="t" style="left:1021.38px;top:564.40px;font-family:'Liberation Sans';font-size:29.5px;font-weight:400;font-style:normal;color:#000;transform:scaleX(0.8090);transform-origin:0 0;">FALSE</div>
<div class="t" style="left:1160.59px;top:564.40px;font-family:'Liberation Sans';font-size:29.5px;font-weight:400;font-style:normal;color:#000;transform:scaleX(0.8103);transform-origin:0 0;">TRUE</div>
<div class="t" style="left:1289.38px;top:564.40px;font-family:'Liberation Sans';font-size:29.5px;font-weight:400;font-style:normal;color:#000;transform:scaleX(0.8090);transform-origin:0 0;">FALSE</div>
<div class="t" style="left:1428.59px;top:564.40px;font-family:'Liberation Sans';font-size:29.5px;font-weight:400;font-style:normal;color:#000;transform:scaleX(0.8103);transform-origin:0 0;">TRUE</div>
<div class="t" style="left:168.05px;top:603.40px;font-family:'Liberation Sans';font-size:29.5px;font-weight:400;font-style:normal;color:#000;transform:scaleX(0.9300);transform-origin:0 0;">1</div>
<div class="t" style="left:263.92px;top:603.40px;font-family:'Liberation Sans';font-size:29.5px;font-weight:400;font-style:normal;color:#000;transform:scaleX(0.9300);transform-origin:0 0;">39.5</div>
<div class="t" style="left:396.99px;top:603.40px;font-family:'Liberation Sans';font-size:29.5px;font-weight:400;font-style:normal;color:#000;transform:scaleX(0.9300);transform-origin:0 0;">17.4</div>
<div class="t" style="left:539.36px;top:603.40px;font-family:'Liberation Sans';font-size:29.5px;font-weight:400;font-style:normal;color:#000;transform:scaleX(0.9300);transform-origin:0 0;">186</div>
<div class="t" style="left:657.55px;top:603.40px;font-family:'Liberation Sans';font-size:29.5px;font-weight:400;font-style:normal;color:#000;transform:scaleX(0.9300);transform-origin:0 0;">3800</div>
<div class="t" style="left:753.38px;top:603.40px;font-family:'Liberation Sans';font-size:29.5px;font-weight:400;font-style:normal;color:#000;transform:scaleX(0.8090);transform-origin:0 0;">FALSE</div>
<div class="t" style="left:887.38px;top:603.40px;font-family:'Liberation Sans';font-size:29.5px;font-weight:400;font-style:normal;color:#000;transform:scaleX(0.8090);transform-origin:0 0;">FALSE</div>
<div class="t" style="left:1021.38px;top:603.40px;font-family:'Liberation Sans';font-size:29.5px;font-weight:400;font-style:normal;color:#000;transform:scaleX(0.8090);transform-origin:0 0;">FALSE</div>
<div class="t" style="left:1160.59px;top:603.40px;font-family:'Liberation Sans';font-size:29.5px;font-weight:400;font-style:normal;color:#000;transform:scaleX(0.8103);transform-origin:0 0;">TRUE</div>
<div class="t" style="left:1294.59px;top:603.40px;font-family:'Liberation Sans';font-size:29.5px;font-weight:400;font-style:normal;color:#000;transform:scaleX(0.8103);transform-origin:0 0;">TRUE</div>
<div class="t" style="left:1423.38px;top:603.40px;font-family:'Liberation Sans';font-size:29.5px;font-weight:400;font-style:normal;color:#000;transform:scaleX(0.8090);transform-origin:0 0;">FALSE</div>
<div class="t" style="left:168.05px;top:642.40px;font-family:'Liberation Sans';font-size:29.5px;font-weight:400;font-style:normal;color:#000;transform:scaleX(0.9300);transform-origin:0 0;">2</div>
<div class="t" style="left:263.92px;top:642.40px;font-family:'Liberation Sans';font-size:29.5px;font-weight:400;font-style:normal;color:#000;transform:scaleX(0.9300);transform-origin:0 0;">40.3</div>
<div class="t" style="left:420.77px;top:642.40px;font-family:'Liberation Sans';font-size:29.5px;font-weight:400;font-style:normal;color:#000;transform:scaleX(0.9133);transform-origin:0 0;">18</div>
<div class="t" style="left:539.36px;top:642.40px;font-family:'Liberation Sans';font-size:29.5px;font-weight:400;font-style:normal;color:#000;transform:scaleX(0.9300);transform-origin:0 0;">195</div>
<div class="t" style="left:657.55px;top:642.40px;font-family:'Liberation Sans';font-size:29.5px;font-weight:400;font-style:normal;color:#000;transform:scaleX(0.9300);transform-origin:0 0;">3250</div>
<div class="t" style="left:753.38px;top:642.40px;font-family:'Liberation Sans';font-size:29.5px;font-weight:400;font-style:normal;color:#000;transform:scaleX(0.8090);transform-origin:0 0;">FALSE</div>
<div class="t" style="left:887.38px;top:642.40px;font-family:'Liberation Sans';font-size:29.5px;font-weight:400;font-style:normal;color:#000;transform:scaleX(0.8090);transform-origin:0 0;">FALSE</div>
<div class="t" style="left:1021.38px;top:642.40px;font-family:'Liberation Sans';font-size:29.5px;font-weight:400;font-style:normal;color:#000;transform:scaleX(0.8090);transform-origin:0 0;">FALSE</div>
<div class="t" style="left:1160.59px;top:642.40px;font-family:'Liberation Sans';font-size:29.5px;font-weight:400;font-style:normal;color:#000;transform:scaleX(0.8103);transform-origin:0 0;">TRUE</div>
<div class="t" style="left:1294.59px;top:642.40px;font-family:'Liberation Sans';font-size:29.5px;font-weight:400;font-style:normal;color:#000;transform:scaleX(0.8103);transform-origin:0 0;">TRUE</div>
<div class="t" style="left:1423.38px;top:642.40px;font-family:'Liberation Sans';font-size:29.5px;font-weight:400;font-style:normal;color:#000;transform:scaleX(0.8090);transform-origin:0 0;">FALSE</div>
<div class="t" style="left:168.05px;top:681.40px;font-family:'Liberation Sans';font-size:29.5px;font-weight:400;font-style:normal;color:#000;transform:scaleX(0.9300);transform-origin:0 0;">3</div>
<div class="t" style="left:271.09px;top:681.40px;font-family:'Liberation Sans';font-size:29.5px;font-weight:400;font-style:normal;color:#000;transform:scaleX(0.9556);transform-origin:0 0;">nan</div>
<div class="t" style="left:405.09px;top:681.40px;font-family:'Liberation Sans';font-size:29.5px;font-weight:400;font-style:normal;color:#000;transform:scaleX(0.9556);transform-origin:0 0;">nan</div>
<div class="t" style="left:539.09px;top:681.40px;font-family:'Liberation Sans';font-size:29.5px;font-weight:400;font-style:normal;color:#000;transform:scaleX(0.9556);transform-origin:0 0;">nan</div>
<div class="t" style="left:673.09px;top:681.40px;font-family:'Liberation Sans';font-size:29.5px;font-weight:400;font-style:normal;color:#000;transform:scaleX(0.9556);transform-origin:0 0;">nan</div>
<div class="t" style="left:753.38px;top:681.40px;font-family:'Liberation Sans';font-size:29.5px;font-weight:400;font-style:normal;color:#000;transform:scaleX(0.8090);transform-origin:0 0;">FALSE</div>
<div class="t" style="left:887.38px;top:681.40px;font-family:'Liberation Sans';font-size:29.5px;font-weight:400;font-style:normal;color:#000;transform:scaleX(0.8090);transform-origin:0 0;">FALSE</div>
<div class="t" style="left:1021.38px;top:681.40px;font-family:'Liberation Sans';font-size:29.5px;font-weight:400;font-style:normal;color:#000;transform:scaleX(0.8090);transform-origin:0 0;">FALSE</div>
<div class="t" style="left:1160.59px;top:681.40px;font-family:'Liberation Sans';font-size:29.5px;font-weight:400;font-style:normal;color:#000;transform:scaleX(0.8103);transform-origin:0 0;">TRUE</div>
<div class="t" style="left:1289.38px;top:681.40px;font-family:'Liberation Sans';font-size:29.5px;font-weight:400;font-style:normal;color:#000;transform:scaleX(0.8090);transform-origin:0 0;">FALSE</div>
<div class="t" style="left:1423.38px;top:681.40px;font-family:'Liberation Sans';font-size:29.5px;font-weight:400;font-style:normal;color:#000;transform:scaleX(0.8090);transform-origin:0 0;">FALSE</div>
<div class="t" style="left:167.12px;top:720.40px;font-family:'Liberation Sans';font-size:29.5px;font-weight:400;font-style:normal;color:#000;transform:scaleX(0.9300);transform-origin:0 0;">4</div>
<div class="t" style="left:263.92px;top:720.40px;font-family:'Liberation Sans';font-size:29.5px;font-weight:400;font-style:normal;color:#000;transform:scaleX(0.9300);transform-origin:0 0;">36.7</div>
<div class="t" style="left:397.92px;top:720.40px;font-family:'Liberation Sans';font-size:29.5px;font-weight:400;font-style:normal;color:#000;transform:scaleX(0.9300);transform-origin:0 0;">19.3</div>
<div class="t" style="left:539.36px;top:720.40px;font-family:'Liberation Sans';font-size:29.5px;font-weight:400;font-style:normal;color:#000;transform:scaleX(0.9300);transform-origin:0 0;">193</div>
<div class="t" style="left:657.55px;top:720.40px;font-family:'Liberation Sans';font-size:29.5px;font-weight:400;font-style:normal;color:#000;transform:scaleX(0.9300);transform-origin:0 0;">3450</div>
<div class="t" style="left:753.38px;top:720.40px;font-family:'Liberation Sans';font-size:29.5px;font-weight:400;font-style:normal;color:#000;transform:scaleX(0.8090);transform-origin:0 0;">FALSE</div>
<div class="t" style="left:887.38px;top:720.40px;font-family:'Liberation Sans';font-size:29.5px;font-weight:400;font-style:normal;color:#000;transform:scaleX(0.8090);transform-origin:0 0;">FALSE</div>
<div class="t" style="left:1021.38px;top:720.40px;font-family:'Liberation Sans';font-size:29.5px;font-weight:400;font-style:normal;color:#000;transform:scaleX(0.8090);transform-origin:0 0;">FALSE</div>
<div class="t" style="left:1160.59px;top:720.40px;font-family:'Liberation Sans';font-size:29.5px;font-weight:400;font-style:normal;color:#000;transform:scaleX(0.8103);transform-origin:0 0;">TRUE</div>
<div class="t" style="left:1294.59px;top:720.40px;font-family:'Liberation Sans';font-size:29.5px;font-weight:400;font-style:normal;color:#000;transform:scaleX(0.8103);transform-origin:0 0;">TRUE</div>
<div class="t" style="left:1423.38px;top:720.40px;font-family:'Liberation Sans';font-size:29.5px;font-weight:400;font-style:normal;color:#000;transform:scaleX(0.8090);transform-origin:0 0;">FALSE</div>
<div class="t" style="left:398.16px;top:1610.00px;font-family:'Liberation Sans';font-size:29px;font-weight:700;font-style:normal;color:#242424;transform:scaleX(0.8396);transform-origin:0 0;">Analysis1</div>
<div class="t" style="left:232.70px;top:1618.60px;font-family:'Liberation Sans';font-size:25.5px;font-weight:400;font-style:normal;color:#242424;transform:scaleX(1.0990);transform-origin:0 0;">penguins</div>
<div class="t" style="left:1704.09px;top:190.80px;font-family:'Liberation Sans';font-size:33.5px;font-weight:700;font-style:normal;color:#242424;transform:scaleX(0.9079);transform-origin:0 0;">Copilot</div>
<div class="t" style="left:1674.52px;top:270.80px;font-family:'Liberation Sans';font-size:24.4px;font-weight:400;font-style:normal;color:#242424;transform:scaleX(0.9798);transform-origin:0 0;">5 rows × 10 columns</div>
<div style="left:1674px;top:301px;width:738px;height:301px;overflow:hidden"><div class="t" style="left:87.00px;top:16.20px;font-family:'Liberation Mono';font-size:25.5px;font-weight:700;font-style:normal;color:#3b3b3b;">bill_length_mm</div></div>
<div style="left:1674px;top:301px;width:738px;height:301px;overflow:hidden"><div class="t" style="left:320.60px;top:16.20px;font-family:'Liberation Mono';font-size:25.5px;font-weight:700;font-style:normal;color:#3b3b3b;">bill_depth_mm</div></div>
<div style="left:1674px;top:301px;width:738px;height:301px;overflow:hidden"><div class="t" style="left:539.60px;top:16.20px;font-family:'Liberation Mono';font-size:25.5px;font-weight:700;font-style:normal;color:#3b3b3b;">flipper_length_mm</div></div>
<div class="t" style="left:1683.00px;top:367.00px;font-family:'Liberation Mono';font-size:25.5px;font-weight:400;font-style:normal;color:#0b7d4b;">0</div>
<div class="t" style="left:1761.00px;top:367.00px;font-family:'Liberation Mono';font-size:25.5px;font-weight:400;font-style:normal;color:#0b7d4b;">39.1</div>
<div class="t" style="left:1994.60px;top:367.00px;font-family:'Liberation Mono';font-size:25.5px;font-weight:400;font-style:normal;color:#0b7d4b;">18.7</div>
<div class="t" style="left:2212.60px;top:367.00px;font-family:'Liberation Mono';font-size:25.5px;font-weight:400;font-style:normal;color:#0b7d4b;">181</div>
<div class="t" style="left:1683.00px;top:417.00px;font-family:'Liberation Mono';font-size:25.5px;font-weight:400;font-style:normal;color:#0b7d4b;">1</div>
<div class="t" style="left:1761.00px;top:417.00px;font-family:'Liberation Mono';font-size:25.5px;font-weight:400;font-style:normal;color:#0b7d4b;">39.5</div>
<div class="t" style="left:1994.60px;top:417.00px;font-family:'Liberation Mono';font-size:25.5px;font-weight:400;font-style:normal;color:#0b7d4b;">17.4</div>
<div class="t" style="left:2212.60px;top:417.00px;font-family:'Liberation Mono';font-size:25.5px;font-weight:400;font-style:normal;color:#0b7d4b;">186</div>
<div class="t" style="left:1683.00px;top:467.00px;font-family:'Liberation Mono';font-size:25.5px;font-weight:400;font-style:normal;color:#0b7d4b;">2</div>
<div class="t" style="left:1762.00px;top:467.00px;font-family:'Liberation Mono';font-size:25.5px;font-weight:400;font-style:normal;color:#0b7d4b;">40.3</div>
<div class="t" style="left:1994.60px;top:467.00px;font-family:'Liberation Mono';font-size:25.5px;font-weight:400;font-style:normal;color:#0b7d4b;">18</div>
<div class="t" style="left:2212.60px;top:467.00px;font-family:'Liberation Mono';font-size:25.5px;font-weight:400;font-style:normal;color:#0b7d4b;">195</div>
<div class="t" style="left:1683.00px;top:517.00px;font-family:'Liberation Mono';font-size:25.5px;font-weight:400;font-style:normal;color:#0b7d4b;">3</div>
<div class="t" style="left:1761.00px;top:517.00px;font-family:'Liberation Mono';font-size:25.5px;font-weight:400;font-style:normal;color:#0b7d4b;">0</div>
<div class="t" style="left:1994.60px;top:517.00px;font-family:'Liberation Mono';font-size:25.5px;font-weight:400;font-style:normal;color:#0b7d4b;">0</div>
<div class="t" style="left:2212.60px;top:517.00px;font-family:'Liberation Mono';font-size:25.5px;font-weight:400;font-style:normal;color:#0b7d4b;">0</div>
<div class="t" style="left:1684.00px;top:567.00px;font-family:'Liberation Mono';font-size:25.5px;font-weight:400;font-style:normal;color:#0b7d4b;">4</div>
<div class="t" style="left:1761.00px;top:567.00px;font-family:'Liberation Mono';font-size:25.5px;font-weight:400;font-style:normal;color:#0b7d4b;">36.7</div>
<div class="t" style="left:1994.60px;top:567.00px;font-family:'Liberation Mono';font-size:25.5px;font-weight:400;font-style:normal;color:#0b7d4b;">19.3</div>
<div class="t" style="left:2212.60px;top:567.00px;font-family:'Liberation Mono';font-size:25.5px;font-weight:400;font-style:normal;color:#0b7d4b;">193</div>
<div class="t" style="left:1745.00px;top:671.00px;font-family:'Liberation Sans';font-size:24px;font-weight:400;font-style:normal;color:#242424;transform:scaleX(0.9886);transform-origin:0 0;">Add results to new sheet</div>
<div class="t" style="left:1730.04px;top:798.00px;font-family:'Liberation Sans';font-size:28px;font-weight:700;font-style:normal;color:#242424;transform:scaleX(0.9579);transform-origin:0 0;">Copilot</div>
<div class="t" style="left:1847.00px;top:804.30px;font-family:'Liberation Sans';font-size:19.6px;font-weight:400;font-style:normal;color:#616161;transform:scaleX(1.0255);transform-origin:0 0;">AI-generated content may be incorrect</div>
<div class="t" style="left:1674.52px;top:863.40px;font-family:'Liberation Sans';font-size:28px;font-weight:400;font-style:normal;color:#242424;transform:scaleX(0.9756);transform-origin:0 0;">The categorical variables have been successfully converted</div>
<div class="t" style="left:1673.52px;top:903.50px;font-family:'Liberation Sans';font-size:28px;font-weight:400;font-style:normal;color:#242424;transform:scaleX(0.9886);transform-origin:0 0;">into numerical dummy variables. This makes the data</div>
<div class="t" style="left:1673.49px;top:943.30px;font-family:'Liberation Sans';font-size:28px;font-weight:400;font-style:normal;color:#242424;transform:scaleX(1.0062);transform-origin:0 0;">ready for modeling and further analysis.</div>
<div class="t" style="left:1952.86px;top:1124.20px;font-family:'Liberation Sans';font-size:24.7px;font-weight:400;font-style:normal;color:#424242;transform:scaleX(0.9351);transform-origin:0 0;">Stop advanced analysis</div>
<div class="t" style="left:1693.00px;top:1264.40px;font-family:'Liberation Sans';font-size:26px;font-weight:400;font-style:normal;color:#333;transform:scaleX(0.9289);transform-origin:0 0;">Visualize the distribution of the newly created dummy</div>
<div class="t" style="left:1693.00px;top:1295.30px;font-family:'Liberation Sans';font-size:26px;font-weight:400;font-style:normal;color:#333;transform:scaleX(0.8826);transform-origin:0 0;">variables.</div>
<div class="t" style="left:1692.36px;top:1363.80px;font-family:'Liberation Sans';font-size:26px;font-weight:400;font-style:normal;color:#333;transform:scaleX(0.9205);transform-origin:0 0;">Build a regression model using the dummy variables and numeric</div>
<div class="t" style="left:1692.80px;top:1395.30px;font-family:'Liberation Sans';font-size:26px;font-weight:400;font-style:normal;color:#333;transform:scaleX(0.8990);transform-origin:0 0;">features.</div>
<div class="t" style="left:1707.59px;top:1519.00px;font-family:'Liberation Sans';font-size:29px;font-weight:400;font-style:normal;color:#707070;transform:scaleX(0.9533);transform-origin:0 0;">Message Copilot</div>
</body></html>
